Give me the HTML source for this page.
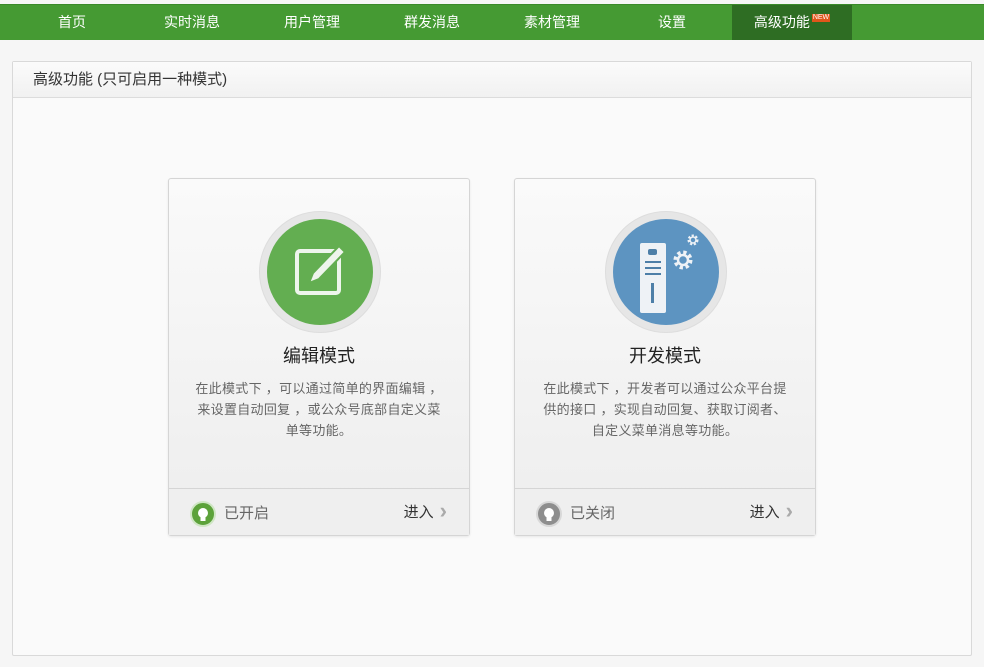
<!DOCTYPE html>
<html><head><meta charset="utf-8"><style>
*{margin:0;padding:0;box-sizing:border-box}
body{width:984px;height:667px;background:#f6f6f6;font-family:"Liberation Sans","Noto Sans CJK SC",sans-serif;position:relative;overflow:hidden}
.nav{position:absolute;top:4px;left:0;width:984px;height:36px;background:#459a33;border-top:1px solid #3a8a2a}
.nav a{position:absolute;top:0;height:35px;line-height:35px;width:120px;text-align:center;color:#fff;font-size:14px;text-decoration:none}
.nav a.act{background:#2e6d23}
.new{display:inline-block;background:#e0561b;color:#fff;font-size:7px;line-height:8px;padding:0 1px;vertical-align:top;margin-top:9px;margin-left:2px}
.panel{position:absolute;left:12px;top:61px;width:960px;height:595px;background:#fafafa;border:1px solid #d9d9d9;border-radius:2px}
.ph{height:36px;line-height:36px;padding-left:20px;font-size:15px;color:#333;background:linear-gradient(#fbfbfb,#f1f1f1);border-bottom:1px solid #dcdcdc}
.card{position:absolute;top:116px;width:302px;height:358px;border:1px solid #d5d5d5;border-radius:3px;background:linear-gradient(#fafafa,#ededed);box-shadow:0 1px 2px rgba(0,0,0,.08)}
.circ{position:absolute;left:90px;top:32px;width:122px;height:122px;border-radius:50%;background:#e6e6e6;border:1px solid #ddd}
.circ .in{position:absolute;left:7px;top:7px;width:106px;height:106px;border-radius:50%}
.t{position:absolute;top:163px;width:100%;text-align:center;font-size:18px;color:#222}
.d{position:absolute;top:199px;left:0;right:0;text-align:center;font-size:13px;line-height:21px;color:#666;white-space:nowrap;letter-spacing:0.3px}
.f{position:absolute;bottom:0;left:0;right:0;height:47px;border-top:1px solid #d5d5d5;background:#efefef}
.bulb{position:absolute;left:21px;top:12px;width:26px;height:26px;border-radius:50%}
.st{position:absolute;left:55px;top:13px;font-size:15px;color:#666}
.go{position:absolute;right:22px;top:12px;font-size:15px;color:#333}
.go b{color:#aaa;font-weight:bold;font-size:22px;line-height:18px;margin-left:6px;vertical-align:-1px}
</style></head><body>
<div class="nav">
<a style="left:12px">首页</a><a style="left:132px">实时消息</a><a style="left:252px">用户管理</a><a style="left:372px">群发消息</a><a style="left:492px">素材管理</a><a style="left:612px">设置</a><a class="act" style="left:732px">高级功能<span class="new">NEW</span></a>
</div>
<div class="panel">
<div class="ph">高级功能 (只可启用一种模式)</div>
<div class="card" style="left:155px">
<div class="circ"><div class="in" style="background:#63ae51">
<svg width="106" height="106" viewBox="0 0 106 106"><rect x="30" y="32" width="42" height="42" rx="3" fill="none" stroke="#eef5ec" stroke-width="4"/><path d="M42 64 L46 54 L72 27 L78 33 L52 60 Z" fill="#eef5ec" stroke="#63ae51" stroke-width="2"/></svg>
</div></div>
<div class="t">编辑模式</div>
<div class="d">在此模式下 ，可以通过简单的界面编辑 ，<br>来设置自动回复 ，或公众号底部自定义菜<br>单等功能。</div>
<div class="f"><div class="bulb" style="background:#5ca23a;border:2px solid #cfe6c4"></div><svg style="position:absolute;left:28px;top:18px" width="12" height="16"><circle cx="6" cy="6" r="5" fill="#fff"/><rect x="3.5" y="10" width="5" height="4" fill="#fff"/></svg><div class="st">已开启</div><div class="go">进入<b>›</b></div></div>
</div>
<div class="card" style="left:501px">
<div class="circ"><div class="in" style="background:#5d94c1">
<svg width="106" height="106" viewBox="0 0 106 106"><rect x="27" y="24" width="26" height="70" rx="2" fill="#eef2f6"/><rect x="35" y="30" width="9" height="6" rx="2" fill="#4d7fa8"/><rect x="32" y="42" width="16" height="2" fill="#4d7fa8"/><rect x="32" y="48" width="16" height="2" fill="#4d7fa8"/><rect x="32" y="54" width="16" height="2" fill="#4d7fa8"/><rect x="38" y="64" width="3" height="20" fill="#4d7fa8"/><circle cx="70" cy="41" r="7" fill="none" stroke="#eef2f6" stroke-width="5" stroke-dasharray="3 2.5"/><circle cx="70" cy="41" r="5" fill="none" stroke="#eef2f6" stroke-width="2.5"/><circle cx="80" cy="21" r="4" fill="none" stroke="#eef2f6" stroke-width="3" stroke-dasharray="2 1.5"/><circle cx="80" cy="21" r="3" fill="none" stroke="#eef2f6" stroke-width="1.5"/></svg>
</div></div>
<div class="t">开发模式</div>
<div class="d">在此模式下 ，开发者可以通过公众平台提<br>供的接口 ，实现自动回复、获取订阅者、<br>自定义菜单消息等功能。</div>
<div class="f"><div class="bulb" style="background:#8e8e8e;border:2px solid #d8d8d8"></div><svg style="position:absolute;left:28px;top:18px" width="12" height="16"><circle cx="6" cy="6" r="5" fill="#fff"/><rect x="3.5" y="10" width="5" height="4" fill="#fff"/></svg><div class="st">已关闭</div><div class="go">进入<b>›</b></div></div>
</div>
</div>
</body></html>
